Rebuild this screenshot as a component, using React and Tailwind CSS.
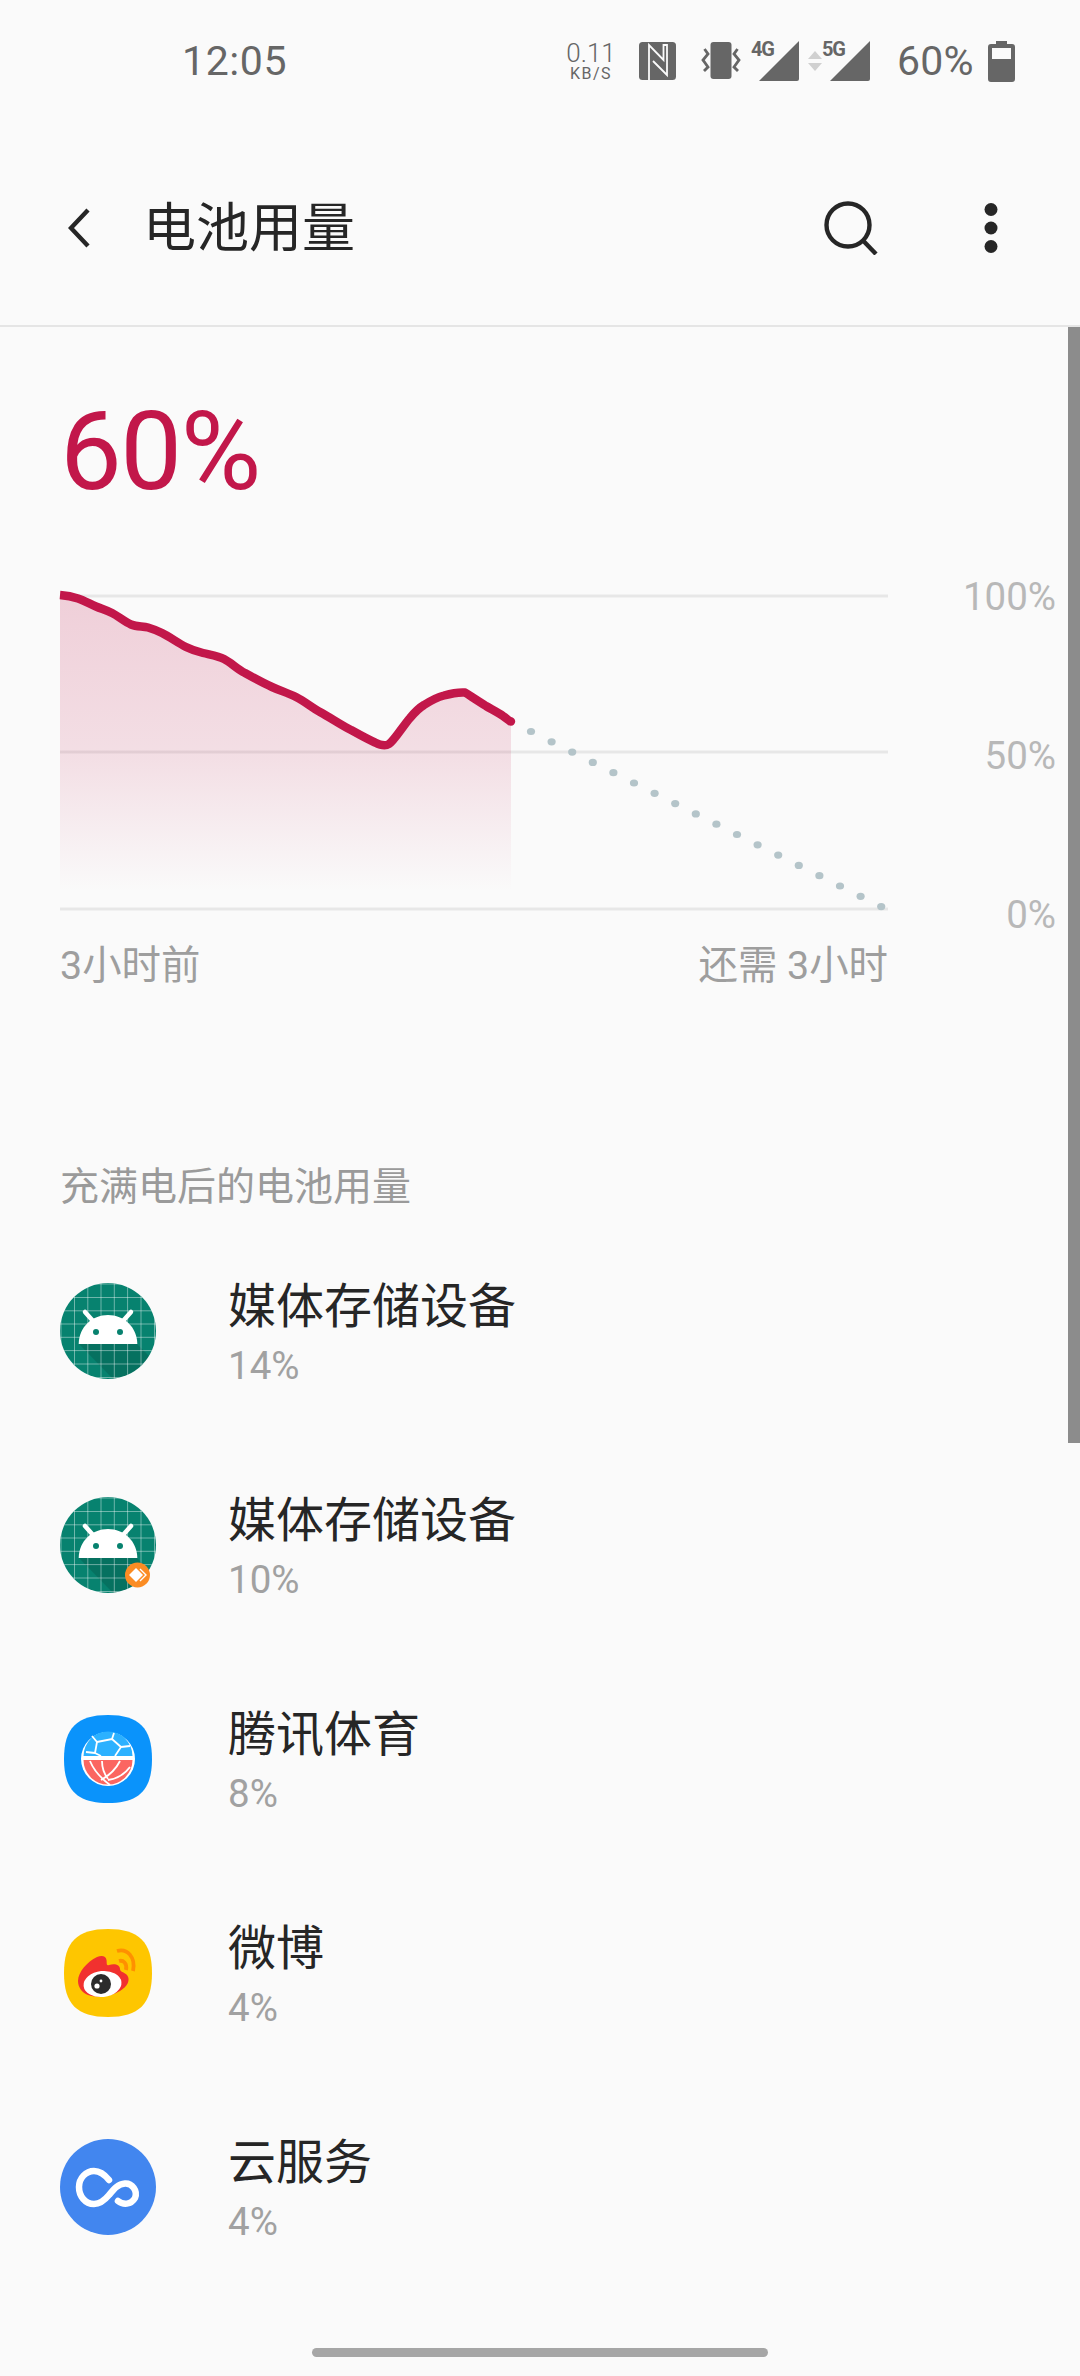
import React from "react";

const FONT = "font-['Roboto','Noto_Sans_CJK_SC',sans-serif]";

const curve =
  "M60 595 C66 595.5 72 596.5 78 598.5 C84 600.5 90 604 96 606.5 C102 609 107 610.5 112 613 C118 616 125 622 131 624.5 C137 627 143 626 148 627.5 C153 629 157 630.5 162 633 C170 637 178 643 186 647 C192 650 197 651.5 203 653 C211 655 218 656 224 659 C231 662.5 237 669 245 673 C254 678 263 683 272 687 C281 691 288 693 296 697 C304 701 312 707.5 320 712 C331 718 341 725 351 730 C360 735 368 739.5 375 742.5 C379 744.5 385 746.5 389 744 C394 741 403 726 410 718 C415 712 418 708.5 424 705 C431 700.5 438 697 444 695.5 C451 693.5 458 692 465 692.5 C472 697 478 701 486 706 C492 709.5 498 712.5 503 716 C506 718 508 720 511 722";

const fillArea = curve + " L511 892 L60 892 Z";

const dots = Array.from({ length: 18 }, (_, i) => ({
  x: 531 + i * 20.6,
  y: 731.5 + i * 10.3,
}));

function Android({ badge, id }) {
  return (
    <svg viewBox="0 0 96 96" className="w-[96px] h-[96px] block">
      <defs>
        <clipPath id={id}>
          <circle cx="48" cy="48" r="48" />
        </clipPath>
      </defs>
      <g clipPath={`url(#${id})`}>
        <rect width="96" height="96" fill="#07826f" />
        <polygon points="19,61 77,61 96,80 96,96 53,96" fill="#000" opacity="0.13" />
        <g stroke="#fff" strokeOpacity="0.42" strokeWidth="1">
          {[1, 14.5, 27.8, 41, 54.3, 67.6, 81, 94.5].map((v) => (
            <React.Fragment key={v}>
              <line x1={v} y1="0" x2={v} y2="96" />
              <line x1="0" y1={v} x2="96" y2={v} />
            </React.Fragment>
          ))}
        </g>
      </g>
      <path d="M25 29 L33 38 M71 29 L63 38" stroke="#fff" strokeWidth="4.5" strokeLinecap="round" />
      <path d="M18.7 61 C19 44 32 32 48 32 C64 32 77 44 77.3 61 Z" fill="#fff" />
      <circle cx="36" cy="49" r="3" fill="#07826f" />
      <circle cx="60" cy="49" r="3" fill="#07826f" />
      {badge && (
        <g>
          <circle cx="77.5" cy="78" r="12.5" fill="#fb8c23" />
          <path d="M76 71 L83 78 L76 85 L69 78 Z" fill="#fff" />
          <path d="M80 72 L86 78 L80 84" fill="none" stroke="#fff" strokeWidth="1.4" />
        </g>
      )}
    </svg>
  );
}

const squircle = "M44 0 C75 0 88 13 88 44 C88 75 75 88 44 88 C13 88 0 75 0 44 C0 13 13 0 44 0 Z";

function Tencent() {
  return (
    <svg viewBox="0 0 88 88" className="w-[88px] h-[88px] block">
      <path d={squircle} fill="#0a93fb" />
      <circle cx="44" cy="44" r="27" fill="#fff" />
      <path d="M19.5 41 A24.5 24.5 0 0 1 68.5 41 Z" fill="#2cb1ff" />
      <path d="M19.5 45 L68.5 45 A24.5 24.5 0 0 1 19.5 45 Z" fill="#fb6661" />
      <g fill="none" stroke="#fff" strokeWidth="1.8">
        <path d="M33 27 L48 24 L57 32 L51 41 M33 27 L31 38 L37 41 M33 27 L28 21 M48 24 L50 18 M57 32 L66 31 M31 38 L22 37" />
        <path d="M26 46 C30 56 38 64 46 70 M38 46 C38 54 41 60 44 64 M56 46 C52 54 46 60 37 65 M66 52 C60 60 52 64 44 65" />
      </g>
    </svg>
  );
}

function Weibo() {
  return (
    <svg viewBox="0 0 88 88" className="w-[88px] h-[88px] block">
      <path d={squircle} fill="#fec600" />
      <path
        d="M14 52 C14 43 23 33 33 28 C38 26 42 27 42.5 31 C43 34 42 37 45 36 C51 34 56 36 56 40 C56 43 60 43 63 46 C67 51 63 58 56 62 C46 68 33 69 24 66 C18 64 14 58 14 52 Z"
        fill="#f1312f"
      />
      <ellipse cx="38.5" cy="55" rx="19" ry="13" fill="#fff" transform="rotate(-6 38.5 55)" />
      <circle cx="37" cy="55" r="10" fill="#2b2b2b" />
      <circle cx="33" cy="57" r="2.6" fill="#fff" />
      <circle cx="37" cy="52" r="1.4" fill="#fff" />
      <path
        d="M53 22 C63 19 72 28 69 42 M55 32 C59 31 63.5 34 62 41"
        fill="none"
        stroke="#ff9000"
        strokeWidth="3.8"
      />
    </svg>
  );
}

function Cloud() {
  return (
    <svg viewBox="0 0 96 96" className="w-[96px] h-[96px] block">
      <circle cx="48" cy="48" r="48" fill="#4286ef" />
      <path
        d="M58 62 C63 66 71 66 75 59 C78 52 72 44 65 44.5 C58 45 54 50 49 56 C44 62 40 65 34 65 C25 65 19 57 19 48 C19 39 26 32 34 32 C41 32 45 36 49 41"
        fill="none"
        stroke="#fff"
        strokeWidth="6.5"
        strokeLinecap="round"
      />
    </svg>
  );
}

function Row({ icon, title, pct }) {
  return (
    <div className="h-[214px] flex items-center pl-[60px]">
      <div className="w-[96px] h-[96px] flex items-center justify-center shrink-0">{icon}</div>
      <div className="ml-[72px] flex flex-col pt-[4px]">
        <div className="h-[60px] leading-[60px] text-[48px] text-[#262626]">{title}</div>
        <div className="h-[48px] mt-[5px] leading-[48px] text-[38.5px] text-[#a1a1a1]">{pct}</div>
      </div>
    </div>
  );
}

function StatusBar() {
  return (
    <div className="h-[122px] flex items-center pl-[182px] text-[#666666] relative">
      <div className="text-[41px] leading-none tracking-[0.6px] w-[386px]">12:05</div>
      <div className="w-[46px] flex flex-col items-center font-light leading-none">
        <span className="text-[26px] leading-[26px]">0.11</span>
        <span className="text-[16px] leading-[16px] tracking-[1.5px] font-normal">KB/S</span>
      </div>
      <svg viewBox="0 0 37 38" className="w-[37px] h-[38px] ml-[25px]">
        <rect width="37" height="38" rx="3.5" fill="#666" />
        <path d="M10 38 V3 L24.5 18 V3 H28 V33 L14 19" fill="none" stroke="#fafafa" strokeWidth="1.8" />
      </svg>
      <svg viewBox="0 0 40 38" className="w-[40px] h-[38px] ml-[25px]">
        <rect x="9.5" y="0" width="21" height="37" rx="3" fill="#666" />
        <path d="M3.5 7 L7 12 L2 18 L7 25 L3 29 M36.5 7 L33 12 L38 18 L33 25 L37 29" fill="none" stroke="#666" strokeWidth="2.8" />
      </svg>
      <svg viewBox="0 0 44 42" className="w-[44px] h-[42px] ml-[14px] overflow-visible">
        <path d="M44 1 V39 A2 2 0 0 1 42 41 H4 Z" fill="#666" />
        <text x="-4" y="16" fontSize="20" fontWeight="700" fill="#666" fontFamily="Roboto" textLength="24">4G</text>
      </svg>
      <svg viewBox="0 0 14 20" className="w-[14px] h-[20px] ml-[9px]">
        <path d="M7 0 L14 8 H0 Z M0 12 H14 L7 20 Z" fill="#d0d0d0" />
      </svg>
      <svg viewBox="0 0 44 42" className="w-[44px] h-[42px] ml-[4px] overflow-visible">
        <path d="M44 1 V39 A2 2 0 0 1 42 41 H4 Z" fill="#666" />
        <text x="-4" y="16" fontSize="20" fontWeight="700" fill="#666" fontFamily="Roboto" textLength="24">5G</text>
      </svg>
      <div className="text-[41px] leading-none ml-[27px] tracking-[0.2px]">60%</div>
      <svg viewBox="0 0 27 41" className="w-[27px] h-[41px] ml-[14px]">
        <path
          fillRule="evenodd"
          d="M8 0 H19 V3 H24 A3 3 0 0 1 27 6 V38 A3 3 0 0 1 24 41 H3 A3 3 0 0 1 0 38 V6 A3 3 0 0 1 3 3 H8 Z M4 7 V18 H23 V7 Z"
          fill="#666"
        />
      </svg>
    </div>
  );
}

function Header() {
  return (
    <div className="h-[205px] box-border border-b-[2px] border-[#e5e5e5] flex items-center pl-[68px] pr-[82px] pt-[8px]">
      <svg viewBox="0 0 22 40" className="w-[22px] h-[40px] shrink-0">
        <path d="M20 2 L3 20 L20 38" fill="none" stroke="#262626" strokeWidth="4.4" />
      </svg>
      <div className="ml-[53px] mt-[4px] text-[53px] leading-none text-[#262626]">电池用量</div>
      <div className="flex-1" />
      <svg viewBox="0 0 54 54" className="w-[54px] h-[54px] shrink-0">
        <circle cx="24" cy="24" r="21.5" fill="none" stroke="#262626" strokeWidth="4.4" />
        <path d="M38.5 39 L52 53" stroke="#262626" strokeWidth="4.4" />
      </svg>
      <svg viewBox="0 0 14 50" className="w-[14px] h-[50px] ml-[106px] shrink-0">
        <circle cx="7" cy="6.5" r="6.5" fill="#262626" />
        <circle cx="7" cy="25" r="6.5" fill="#262626" />
        <circle cx="7" cy="43.5" r="6.5" fill="#262626" />
      </svg>
    </div>
  );
}

function Chart() {
  return (
    <svg viewBox="60 574 830 360" className="w-[830px] h-[360px] block shrink-0 overflow-visible">
      <defs>
        <linearGradient id="area" x1="0" y1="595" x2="0" y2="892" gradientUnits="userSpaceOnUse">
          <stop offset="0" stopColor="#c2174a" stopOpacity="0.19" />
          <stop offset="0.55" stopColor="#c2174a" stopOpacity="0.12" />
          <stop offset="0.85" stopColor="#c2174a" stopOpacity="0.04" />
          <stop offset="1" stopColor="#c2174a" stopOpacity="0" />
        </linearGradient>
      </defs>
      {[596, 752, 909].map((y) => (
        <rect key={y} x="60" y={y - 1.5} width="828" height="3" fill="#e7e7e7" />
      ))}
      <path d={fillArea} fill="url(#area)" />
      {dots.map((d) => (
        <ellipse key={d.x} cx={d.x} cy={d.y} rx="4.1" ry="3.6" fill="#b4c4c9" />
      ))}
      <path d={curve} fill="none" stroke="#c2174a" strokeWidth="8.5" strokeLinejoin="round" />
      <circle cx="511" cy="721.5" r="4.2" fill="#c2174a" />
    </svg>
  );
}

export default function App() {
  return (
    <div className={`relative w-[1080px] h-[2376px] overflow-hidden bg-[#fafafa] ${FONT}`}>
      <StatusBar />
      <Header />
      <div className="pl-[60px] mt-[55px] h-[140px] leading-[140px] text-[110px] tracking-[-1.5px] text-[#c2174a]">60%</div>
      <div className="flex pl-[60px] mt-[52px] h-[360px]">
        <Chart />
        <div className="ml-[6px] w-[160px] h-[363px] pt-[1px] flex flex-col justify-between items-end text-[38.5px] leading-[44px] text-[#b8b8b8]">
          <span>100%</span>
          <span>50%</span>
          <span>0%</span>
        </div>
      </div>
      <div className="flex justify-between w-[828px] ml-[60px] mt-[8px] h-[48px] leading-[48px] text-[39.4px] text-[#9e9e9e]">
        <span>3小时前</span>
        <span>还需 3小时</span>
      </div>
      <div className="pl-[60px] mt-[173px] h-[48px] leading-[48px] text-[39px] text-[#9a9a9a]">充满电后的电池用量</div>
      <div className="mt-[13px]">
        <Row icon={<Android id="a1" />} title="媒体存储设备" pct="14%" />
        <Row icon={<Android id="a2" badge />} title="媒体存储设备" pct="10%" />
        <Row icon={<Tencent />} title="腾讯体育" pct="8%" />
        <Row icon={<Weibo />} title="微博" pct="4%" />
        <Row icon={<Cloud />} title="云服务" pct="4%" />
      </div>
      <div className="absolute right-0 top-[327px] w-[12px] h-[1116px] bg-[#8c8c8c]" />
      <div className="absolute left-[312px] top-[2348px] w-[456px] h-[9px] rounded-full bg-[#a6a6a6]" />
    </div>
  );
}
